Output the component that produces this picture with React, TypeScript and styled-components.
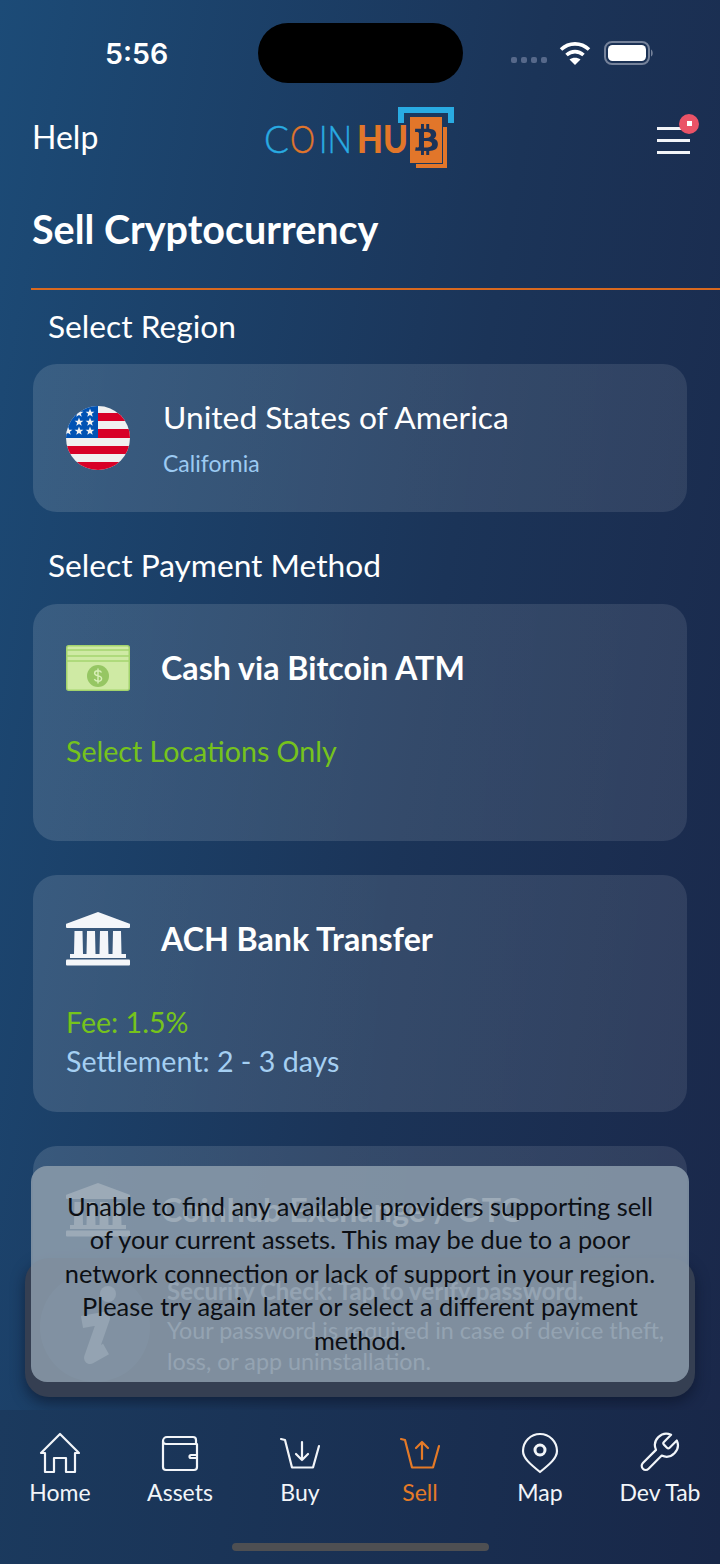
import React from 'react';
import styled, { createGlobalStyle } from 'styled-components';
import { FaBtc } from 'react-icons/fa';

const GlobalStyle = createGlobalStyle`
  html, body {
    margin: 0;
    padding: 0;
    background: #1a2849;
  }
  * {
    box-sizing: border-box;
  }
`;

const FONT = `"Lato", "Noto Sans", sans-serif`;

const S = {
  Phone: styled.div`
    position: relative;
    width: 720px;
    height: 1564px;
    overflow: hidden;
    display: flex;
    flex-direction: column;
    font-family: ${FONT};
    color: #fff;
    background: linear-gradient(100deg, #1c4b77 0%, #1b3458 55%, #1a2749 100%);
  `,

  StatusBar: styled.div`
    height: 100px;
    flex: none;
    display: grid;
    grid-template-columns: 258px 205px 1fr;
    padding-top: 23px;
  `,
  Time: styled.div`
    height: 60px;
    line-height: 61px;
    padding-left: 105px;
    font-family: "Inter", sans-serif;
    font-weight: 600;
    font-size: 28.5px;
  `,
  Island: styled.div`
    height: 60px;
    border-radius: 30px;
    background: #000;
  `,
  StatusIcons: styled.div`
    display: flex;
    align-items: center;
    height: 60px;
    padding-left: 48px;
  `,
  Dots: styled.div`
    display: flex;
    gap: 4px;
    margin-top: 14px;
    margin-right: 12px;
  `,
  Dot: styled.span`
    width: 6px;
    height: 6px;
    border-radius: 2px;
    background: #56688a;
  `,

  Header: styled.div`
    height: 80px;
    flex: none;
    display: grid;
    grid-template-columns: 233px 190px 1fr;
    align-items: center;
    padding: 0 30px 4px 32px;
  `,
  Help: styled.div`
    font-size: 32px;
    line-height: 40px;
    margin-top: -2px;
  `,
  Menu: styled.div`
    position: relative;
    justify-self: end;
    width: 33px;
    height: 27px;
    margin-top: 4px;
    display: flex;
    flex-direction: column;
    justify-content: space-between;
  `,
  MenuLine: styled.span`
    height: 3px;
    background: #f2f4f8;
  `,
  Badge: styled.span`
    position: absolute;
    right: -9px;
    top: -13px;
    width: 20px;
    height: 20px;
    border-radius: 50%;
    background: #ea5367;
    display: flex;
    align-items: center;
    justify-content: center;
    &::after {
      content: '';
      width: 5px;
      height: 5px;
      background: #fff;
    }
  `,

  Title: styled.h1`
    margin: 0;
    height: 108px;
    flex: none;
    padding: 24px 0 0 32px;
    font-size: 39.5px;
    line-height: 50px;
    font-weight: 700;
  `,
  Divider: styled.div`
    flex: none;
    height: 2px;
    margin-left: 31px;
    background: #d9691f;
  `,
  Content: styled.div`
    flex: 1;
    min-height: 0;
    overflow: hidden;
    padding: 0 33px;
    display: flex;
    flex-direction: column;
  `,
  SectionLabel: styled.div`
    height: 74px;
    flex: none;
    padding: 17px 0 0 15px;
    font-size: 31.7px;
    line-height: 38px;
    &:not(:first-child) {
      height: 58px;
      padding-top: 0;
    }
  `,
  Card: styled.div<{ $height: number }>`
    flex: none;
    height: ${(p) => p.$height}px;
    margin-bottom: 34px;
    border-radius: 24px;
    background: linear-gradient(95deg, rgba(255, 255, 255, 0.13), rgba(255, 255, 255, 0.095));
    padding: 41px 33px 0;
  `,
  Row: styled.div`
    height: 46px;
    display: flex;
    align-items: center;
    gap: 31px;
  `,
  RegionRow: styled.div`
    display: flex;
    align-items: center;
    gap: 33px;
    margin-top: -7px;
  `,
  RegionName: styled.div`
    font-size: 31.8px;
    line-height: 38px;
  `,
  RegionSub: styled.div`
    font-size: 23px;
    line-height: 30px;
    margin-top: 12px;
    color: #9ccaf2;
  `,
  MethodName: styled.div`
    font-size: 32.2px;
    line-height: 44px;
    font-weight: 700;
  `,
  Details: styled.div`
    margin-top: 41px;
    font-size: 28.6px;
    line-height: 38.5px;
  `,
  Green: styled.div`
    color: #76c31c;
  `,
  Blue: styled.div`
    color: #a5cff2;
  `,

  Banner: styled.div`
    position: absolute;
    left: 25px;
    top: 1258px;
    width: 670px;
    height: 139px;
    border-radius: 24px;
    background: #353f52;
    box-shadow: 0 6px 14px rgba(10, 16, 34, 0.55);
    padding: 14px 25px 0 15px;
    display: flex;
    gap: 17px;
    color: #c2cad4;
  `,
  BannerIcon: styled.div`
    flex: none;
    width: 110px;
    height: 110px;
  `,
  BannerText: styled.div`
    font-size: 23.3px;
    line-height: 31px;
    padding-top: 3px;
  `,
  BannerTitle: styled.div`
    font-size: 24px;
    font-weight: 700;
    margin-bottom: 9px;
  `,
  Toast: styled.div`
    position: absolute;
    left: 31px;
    top: 1166px;
    width: 658px;
    height: 216px;
    border-radius: 16px;
    background: rgba(140, 156, 171, 0.85);
    color: #0c0f14;
    font-size: 25.4px;
    line-height: 33.4px;
    text-align: center;
    padding: 24px 32px 0;
  `,

  TabBar: styled.nav`
    position: relative;
    height: 154px;
    flex: none;
    display: grid;
    grid-template-columns: repeat(6, 120px);
    background: linear-gradient(95deg, #1b3a5e, #182748);
    padding-top: 22px;
  `,
  Tab: styled.div<{ $active?: boolean }>`
    display: flex;
    flex-direction: column;
    align-items: center;
    color: ${(p) => (p.$active ? '#e57a27' : '#f2f5f9')};
    font-size: 23px;
    line-height: 30px;
    gap: 3px;
  `,
  HomeIndicator: styled.span`
    position: absolute;
    left: 232px;
    bottom: 13px;
    width: 257px;
    height: 8px;
    border-radius: 4px;
    background: #4e4f52;
  `,
};

const Flag = () => (
  <svg width="64" height="64" viewBox="0 0 64 64">
    <defs>
      <clipPath id="flag-circle">
        <circle cx="32" cy="32" r="32" />
      </clipPath>
    </defs>
    <g clipPath="url(#flag-circle)">
      <rect width="64" height="64" fill="#f0f0f0" />
      <rect x="32" y="7" width="32" height="8" fill="#d80027" />
      <rect x="32" y="23" width="32" height="9" fill="#d80027" />
      <rect y="40" width="64" height="8" fill="#d80027" />
      <rect y="56" width="64" height="8" fill="#d80027" />
      <rect width="32" height="32" fill="#0052b4" />
      {[
        [13, 7],
        [24, 7],
        [13, 16],
        [24, 16],
        [2, 25],
        [13, 25],
        [24, 25],
      ].map(([cx, cy]) => (
        <polygon
          key={`${cx}-${cy}`}
          fill="#f0f0f0"
          transform={`translate(${cx} ${cy}) scale(1.1)`}
          points="0,-4 1.1,-1.2 4,-1.2 1.7,.6 2.5,3.4 0,1.8 -2.5,3.4 -1.7,.6 -4,-1.2 -1.1,-1.2"
        />
      ))}
    </g>
  </svg>
);

const Cash = () => (
  <svg width="64" height="46" viewBox="0 0 64 46">
    <rect x=".75" y=".75" width="62.5" height="44.5" rx="2" fill="#cfeaa4" stroke="#a3d36c" strokeWidth="1.5" />
    <path d="M0 5h64M0 11h64M0 16h64" stroke="#a5d56f" strokeWidth="1.5" fill="none" />
    <circle cx="32" cy="31" r="11" fill="#96c663" />
    <path
      d="M35.5 27.5c-.6-1.2-2-1.8-3.5-1.8-1.9 0-3.4 1-3.4 2.6 0 3.4 7 1.8 7 5.2 0 1.7-1.6 2.7-3.6 2.7-1.6 0-3-.7-3.7-2M32 23.5v15"
      stroke="#d8efb8"
      strokeWidth="1.4"
      fill="none"
    />
  </svg>
);

const Bank = () => (
  <svg width="64" height="54" viewBox="0 0 64 54" fill="#f4f6f9">
    <path d="M32 0 63 11.5a1 1 0 0 1 1 1V15a1 1 0 0 1-1 1H1a1 1 0 0 1-1-1v-2.5a1 1 0 0 1 1-1z" />
    <path d="M8.5 19h8l.5 23H8zM21 19h8l.5 23h-9zM34 19h8l.5 23h-9zM47 19h8l.5 23h-9z" />
    <rect x="4" y="42" width="56" height="4" />
    <rect y="47.5" width="64" height="6" rx="1" />
  </svg>
);

const Logo = () => (
  <svg width="190" height="64" viewBox="0 0 190 64">
    <text x="-1" y="47" fontFamily="Lato" fontWeight="300" fontSize="37" fill="#29abe2" stroke="#29abe2" strokeWidth=".4" textLength="25" lengthAdjust="spacingAndGlyphs">
      C
    </text>
    <text x="25" y="47" fontFamily="Lato" fontWeight="300" fontSize="37" fill="#e2762a" stroke="#e2762a" strokeWidth=".4" textLength="25" lengthAdjust="spacingAndGlyphs">
      O
    </text>
    <text x="54" y="47" fontFamily="Lato" fontWeight="300" fontSize="37" fill="#29abe2" stroke="#29abe2" strokeWidth=".4" textLength="33" lengthAdjust="spacingAndGlyphs">
      IN
    </text>
    <text x="92" y="47" fontFamily="Lato" fontWeight="900" fontSize="37" fill="#e2762a" textLength="51" lengthAdjust="spacingAndGlyphs">
      HU
    </text>
    <path d="M136 17V4h50v13" fill="none" stroke="#29abe2" strokeWidth="6" />
    <path d="M178 21h4v41h-31v-4h27z" fill="#e2762a" />
    <rect x="145" y="11" width="32" height="46" fill="#e2762a" />
    <FaBtc x="146" y="18" size={31} color="#1c3358" />
  </svg>
);

const InfoIcon = () => (
  <svg width="110" height="110" viewBox="0 0 110 110">
    <circle cx="55" cy="55" r="55" fill="#47556c" />
    <circle cx="68" cy="22" r="8" fill="#c2cad4" />
    <path d="M42 50l22-4-14 40 16-9" fill="none" stroke="#c2cad4" strokeWidth="12" strokeLinejoin="round" />
  </svg>
);

const Icon = ({ children }: { children: React.ReactNode }) => (
  <svg width="44" height="42" viewBox="0 0 44 42" fill="none" stroke="currentColor" strokeWidth="2.2" strokeLinecap="round" strokeLinejoin="round">
    {children}
  </svg>
);

const basket = 'M3 7l4 1 7 27.5h21L41 14';

const tabs = [
  {
    label: 'Home',
    icon: <path d="M3 21 22 2l19 19h-4v19H28V26H16v14H7V21z" />,
  },
  {
    label: 'Assets',
    icon: (
      <>
        <path d="M38 12V8a3 3 0 0 0-3-3H9a4 4 0 0 0-4 4v26a3 3 0 0 0 3 3h28a3 3 0 0 0 3-3V12H8a3 3 0 0 1-3-3" />
        <path d="M39 23h-6a1.5 1.5 0 0 0 0 3h6" />
      </>
    ),
  },
  {
    label: 'Buy',
    icon: (
      <>
        <path d={basket} />
        <path d="M24 10v18M18 22l6 6 6-6" />
      </>
    ),
  },
  {
    label: 'Sell',
    active: true,
    icon: (
      <>
        <path d={basket} />
        <path d="M24 27V10M18 16l6-6 6 6" />
      </>
    ),
  },
  {
    label: 'Map',
    icon: (
      <>
        <path d="M22 40C12 32 5 26 5 19a17 17 0 0 1 34 0c0 7-7 13-17 21z" />
        <circle cx="22" cy="18" r="5" strokeWidth="3" />
      </>
    ),
  },
  {
    label: 'Dev Tab',
    icon: (
      <g transform="translate(-2 -2) scale(1.9)" strokeWidth="1.15">
        <path d="M14.7 6.3a1 1 0 0 0 0 1.4l1.6 1.6a1 1 0 0 0 1.4 0l3.77-3.77a6 6 0 0 1-7.94 7.94l-6.91 6.91a2.12 2.12 0 0 1-3-3l6.91-6.91a6 6 0 0 1 7.94-7.94l-3.76 3.76z" />
      </g>
    ),
  },
];

const App: React.FC = () => {
  return (
    <S.Phone>
      <GlobalStyle />
      <S.StatusBar>
        <S.Time>5:56</S.Time>
        <S.Island />
        <S.StatusIcons>
          <S.Dots>
            <S.Dot />
            <S.Dot />
            <S.Dot />
            <S.Dot />
          </S.Dots>
          <svg width="32" height="24" viewBox="0 0 32 24" fill="none" stroke="#fff" strokeWidth="3.6">
            <path d="M2 8.5c8-7.5 20-7.5 28 0" />
            <path d="M7.5 14c5-4.5 12-4.5 17 0" />
            <path d="M16 24l-5.5-5.5c3-2.5 8-2.5 11 0z" fill="#fff" stroke="none" />
          </svg>
          <svg style={{ marginLeft: 13 }} width="50" height="24" viewBox="0 0 50 24">
            <rect x="1" y="1" width="44" height="22" rx="7" fill="none" stroke="#75829a" strokeWidth="2" />
            <rect x="4" y="4" width="38" height="16" rx="4.5" fill="#fff" />
            <path d="M47 8.5c2 .5 2.5 6.5 0 7z" fill="#75829a" />
          </svg>
        </S.StatusIcons>
      </S.StatusBar>

      <S.Header>
        <S.Help>Help</S.Help>
        <Logo />
        <S.Menu>
          <S.MenuLine />
          <S.MenuLine />
          <S.MenuLine />
          <S.Badge />
        </S.Menu>
      </S.Header>

      <S.Title>Sell Cryptocurrency</S.Title>
      <S.Divider />

      <S.Content>
        <S.SectionLabel>Select Region</S.SectionLabel>
        <S.Card $height={148}>
          <S.RegionRow>
            <Flag />
            <div>
              <S.RegionName>United States of America</S.RegionName>
              <S.RegionSub>California</S.RegionSub>
            </div>
          </S.RegionRow>
        </S.Card>

        <S.SectionLabel>Select Payment Method</S.SectionLabel>
        <S.Card $height={237}>
          <S.Row>
            <Cash />
            <S.MethodName>Cash via Bitcoin ATM</S.MethodName>
          </S.Row>
          <S.Details>
            <S.Green>Select Locations Only</S.Green>
          </S.Details>
        </S.Card>
        <S.Card $height={237}>
          <S.Row>
            <Bank />
            <S.MethodName>ACH Bank Transfer</S.MethodName>
          </S.Row>
          <S.Details>
            <S.Green>Fee: 1.5%</S.Green>
            <S.Blue>Settlement: 2 - 3 days</S.Blue>
          </S.Details>
        </S.Card>
        <S.Card $height={237}>
          <S.Row>
            <Bank />
            <S.MethodName>Coinhub Exchange / OTC</S.MethodName>
          </S.Row>
        </S.Card>
      </S.Content>

      <S.Banner>
        <S.BannerIcon>
          <InfoIcon />
        </S.BannerIcon>
        <S.BannerText>
          <S.BannerTitle>Security Check: Tap to verify password.</S.BannerTitle>
          Your password is required in case of device theft, loss, or app uninstallation.
        </S.BannerText>
      </S.Banner>
      <S.Toast>
        Unable to find any available providers supporting sell of your current assets. This may be due to a poor
        network connection or lack of support in your region. Please try again later or select a different payment
        method.
      </S.Toast>

      <S.TabBar>
        {tabs.map((tab) => (
          <S.Tab key={tab.label} $active={tab.active}>
            <Icon>{tab.icon}</Icon>
            {tab.label}
          </S.Tab>
        ))}
        <S.HomeIndicator />
      </S.TabBar>
    </S.Phone>
  );
};

export default App;
